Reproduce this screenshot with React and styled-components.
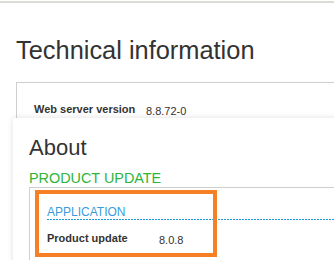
import React from 'react'
import styled, { createGlobalStyle } from 'styled-components'

const GlobalStyle = createGlobalStyle`
  html, body {
    margin: 0;
    padding: 0;
    background: #fff;
    overflow: hidden;
  }
  body {
    font-family: 'Liberation Sans', Arial, sans-serif;
    color: #333;
  }
`

const Page = styled.div`
  position: relative;
  width: 334px;
  height: 260px;
  overflow: hidden;
`

const TopBar = styled.div`
  height: 2px;
  margin-top: 1px;
  background: #dcdcd5;
`

const Content = styled.div`
  padding-left: 16px;
`

const Title = styled.h1`
  margin: 32px 0 17px;
  font-size: 25.4px;
  line-height: 30px;
  font-weight: normal;
  color: #333;
`

const Panel = styled.div`
  width: 420px;
  border: 1px solid #cfcfcf;
  padding: ${p => p.$pad || '18px 17px 30px'};
  box-sizing: border-box;
`

const Row = styled.div`
  display: flex;
  align-items: flex-start;
`

const Label = styled.span`
  width: 112px;
  flex: none;
  font-size: 11px;
  line-height: 16px;
  font-weight: bold;
  color: #333;
`

const Value = styled.span`
  font-size: 11px;
  line-height: 16px;
  padding-top: 2px;
  color: #333;
`

const Card = styled.div`
  position: absolute;
  left: 13px;
  top: 118px;
  width: 400px;
  height: 200px;
  padding: 17px 16px 0;
  box-sizing: border-box;
  background: #fff;
  box-shadow: 0 0 6px rgba(0, 0, 0, 0.13);
`

const CardTitle = styled.h2`
  margin: 0 0 9px;
  font-size: 22px;
  line-height: 26px;
  font-weight: normal;
  color: #333;
`

const SectionTitle = styled.div`
  font-size: 14.4px;
  line-height: 17px;
  color: #2db53a;
`

const Section = styled.div`
  position: relative;
  padding: 17px 0 0 17px;
`

const SubTitle = styled.div`
  font-size: 12px;
  line-height: 14px;
  color: #3a9bdc;
  padding-bottom: 1px;
  margin-bottom: 10px;
  background-image: linear-gradient(to right, #1a9ad6 2px, transparent 2px);
  background-size: 3px 1px;
  background-repeat: repeat-x;
  background-position: 0 100%;
`

const Highlight = styled.div`
  position: absolute;
  left: 5px;
  top: 2px;
  width: 182px;
  height: 67px;
  border: 4px solid #f58025;
  box-sizing: border-box;
  pointer-events: none;
`

export default function App() {
  return (
    <Page>
      <GlobalStyle />
      <TopBar />
      <Content>
        <Title>Technical information</Title>
        <Panel>
          <Row>
            <Label>Web server version</Label>
            <Value>8.8.72-0</Value>
          </Row>
        </Panel>
      </Content>
      <Card>
        <CardTitle>About</CardTitle>
        <SectionTitle>PRODUCT UPDATE</SectionTitle>
        <Panel $pad="0 0 20px">
          <Section>
            <SubTitle>APPLICATION</SubTitle>
            <Row>
              <Label>Product update</Label>
              <Value>8.0.8</Value>
            </Row>
            <Highlight />
          </Section>
        </Panel>
      </Card>
    </Page>
  )
}
